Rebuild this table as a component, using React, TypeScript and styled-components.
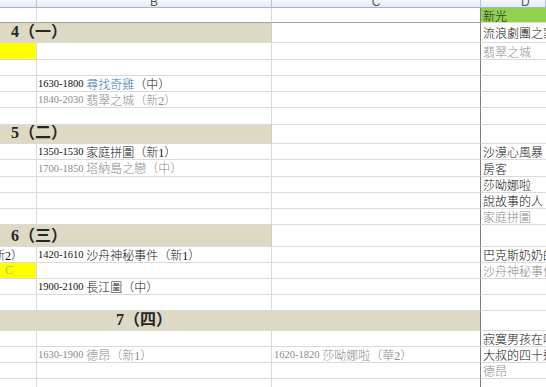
import React from 'react'
import styled, { createGlobalStyle } from 'styled-components'

const GlobalStyle = createGlobalStyle`
  body {
    margin: 0;
    background: #ffffff;
    overflow: hidden;
  }
`

const COLUMNS = '37px 235px 209px 1fr'
const GRID = '#dadada'

type Tone = 'black' | 'gray' | 'blue' | 'green'

const toneColor: Record<Tone, string> = {
  black: '#111111',
  gray: '#8a8a8a',
  blue: '#3a7db3',
  green: '#9ccf5a'
}

export default function App() {
  return (
    <>
      <GlobalStyle />
      <Sheet>
        <HeaderRow>
          <HeaderCell />
          <HeaderCell>B</HeaderCell>
          <HeaderCell>C</HeaderCell>
          <HeaderCell>D</HeaderCell>
        </HeaderRow>

        <Row $h={15}>
          <Cell $rule />
          <Cell $rule />
          <Cell $rule $edge />
          <DCell $fill="#92d050">新光</DCell>
        </Row>

        <Row $h={20}>
          <Band $span={2} $indent={11}>4（一）</Band>
          <Cell $edge />
          <DCell>流浪劇團之家</DCell>
        </Row>

        <Row $h={17}>
          <Cell $fill="#ffff00" />
          <Cell />
          <Cell $edge />
          <DCell $tone="gray">翡翠之城</DCell>
        </Row>

        <EmptyRow h={16} />

        <Row $h={16}>
          <Cell />
          <Cell>
            <Num>1630-1800 </Num>
            <Han $tone="blue">尋找奇雞</Han>
            <Han>（中）</Han>
          </Cell>
          <Cell $edge />
          <DCell />
        </Row>

        <Row $h={16}>
          <Cell />
          <Cell $tone="gray">
            <Num>1840-2030 </Num>
            <Han>翡翠之城（新2）</Han>
          </Cell>
          <Cell $edge />
          <DCell />
        </Row>

        <EmptyRow h={17} />

        <Row $h={19}>
          <Band $span={2} $indent={11}>5（二）</Band>
          <Cell $edge />
          <DCell />
        </Row>

        <Row $h={16}>
          <Cell />
          <Cell>
            <Num>1350-1530 </Num>
            <Han>家庭拼圖（新1）</Han>
          </Cell>
          <Cell $edge />
          <DCell>沙漠心風暴</DCell>
        </Row>

        <Row $h={17}>
          <Cell />
          <Cell $tone="gray">
            <Num>1700-1850 </Num>
            <Han>塔納島之戀（中）</Han>
          </Cell>
          <Cell $edge />
          <DCell>房客</DCell>
        </Row>

        <EmptyRow h={16} d="莎呦娜啦" />
        <EmptyRow h={16} d="說故事的人" />
        <EmptyRow h={16} d="家庭拼圖" tone="gray" />

        <Row $h={22}>
          <Band $span={2} $indent={11}>6（三）</Band>
          <Cell $edge />
          <DCell />
        </Row>

        <Row $h={16}>
          <Cell $right>
            <Han>（新2）</Han>
          </Cell>
          <Cell>
            <Num>1420-1610 </Num>
            <Han>沙舟神秘事件（新1）</Han>
          </Cell>
          <Cell $edge />
          <DCell>巴克斯奶奶的派對</DCell>
        </Row>

        <Row $h={16}>
          <Cell $fill="#ffff00" $tone="green" $pad={5}>
            <Han>C</Han>
          </Cell>
          <Cell />
          <Cell $edge />
          <DCell $tone="gray">沙舟神秘事件</DCell>
        </Row>

        <Row $h={16}>
          <Cell />
          <Cell>
            <Num>1900-2100 </Num>
            <Han>長江圖（中）</Han>
          </Cell>
          <Cell $edge />
          <DCell />
        </Row>

        <EmptyRow h={16} />

        <Row $h={20}>
          <Band $span={3} $indent={116} $edge>
            7（四）
          </Band>
          <DCell />
        </Row>

        <EmptyRow h={16} d="寂寞男孩在哪裡" />

        <Row $h={16}>
          <Cell />
          <Cell $tone="gray">
            <Num>1630-1900 </Num>
            <Han>德昂（新1）</Han>
          </Cell>
          <Cell $edge $tone="gray" $pad={2}>
            <Num>1620-1820 </Num>
            <Han>莎呦娜啦（華2）</Han>
          </Cell>
          <DCell>大叔的四十道菜</DCell>
        </Row>

        <EmptyRow h={16} d="德昂" tone="gray" />
        <EmptyRow h={16} />
      </Sheet>
    </>
  )
}

const EmptyRow: React.FC<{ h: number; d?: string; tone?: Tone }> = ({
  h,
  d,
  tone
}) => (
  <Row $h={h}>
    <Cell />
    <Cell />
    <Cell $edge />
    <DCell $tone={tone}>{d}</DCell>
  </Row>
)

const Sheet = styled.div`
  width: 546px;
  height: 387px;
  overflow: hidden;
  font-family: 'Liberation Serif', 'Noto Sans CJK TC', serif;
  color: #111111;
`

const HeaderRow = styled.div`
  display: grid;
  grid-template-columns: ${COLUMNS};
  height: 8px;
  background: linear-gradient(#f4f7fb, #e1e9f4);
`

const HeaderCell = styled.div`
  display: flex;
  align-items: flex-end;
  justify-content: center;
  overflow: hidden;
  border-right: 1px solid #b4c4d8;
  border-bottom: 1px solid #9eb6ce;
  font-family: 'Liberation Sans', sans-serif;
  font-size: 12px;
  line-height: 10px;
  color: #4a5a6e;

  &:last-child {
    justify-content: flex-start;
    padding-left: 40px;
  }
`

const Row = styled.div<{ $h: number }>`
  display: grid;
  grid-template-columns: ${COLUMNS};
  height: ${(p) => p.$h}px;
`

const Cell = styled.div<{
  $fill?: string
  $tone?: Tone
  $edge?: boolean
  $rule?: boolean
  $right?: boolean
  $pad?: number
}>`
  display: flex;
  align-items: center;
  justify-content: ${(p) => (p.$right ? 'flex-end' : 'flex-start')};
  min-width: 0;
  overflow: hidden;
  white-space: nowrap;
  padding: 0 ${(p) => (p.$right ? 13 : 0)}px 0 ${(p) => p.$pad ?? 1}px;
  background: ${(p) => p.$fill ?? 'transparent'};
  border-right: 1px solid ${(p) => (p.$edge ? '#7f7f7f' : GRID)};
  border-bottom: 1px solid ${(p) => (p.$rule ? '#a0a0a0' : GRID)};
  font-size: 12px;
  font-weight: 300;
  color: ${(p) => toneColor[p.$tone ?? 'black']};
`

const DCell = styled.div<{ $fill?: string; $tone?: Tone }>`
  display: flex;
  align-items: center;
  min-width: 0;
  overflow: hidden;
  white-space: nowrap;
  padding-left: 2px;
  background: ${(p) => p.$fill ?? 'transparent'};
  border-bottom: 1px solid ${GRID};
  font-family: 'Noto Sans CJK TC', sans-serif;
  font-size: 12px;
  font-weight: 300;
  color: ${(p) => toneColor[p.$tone ?? 'black']};
`

const Band = styled.div<{ $span: number; $indent: number; $edge?: boolean }>`
  grid-column: span ${(p) => p.$span};
  display: flex;
  align-items: flex-end;
  padding: 0 0 2px ${(p) => p.$indent}px;
  background: #ddd9c4;
  border-right: 1px solid ${(p) => (p.$edge ? '#7f7f7f' : '#d2cdb5')};
  border-bottom: 1px solid ${GRID};
  font-size: 16px;
  line-height: 16px;
  font-weight: 700;
  color: #262626;
  white-space: nowrap;
`

const Num = styled.span`
  font-family: 'Liberation Serif', serif;
  font-size: 10.5px;
  font-weight: 400;
  white-space: pre;
`

const Han = styled.span<{ $tone?: Tone }>`
  font-family: 'Liberation Serif', 'Noto Sans CJK TC', serif;
  ${(p) => (p.$tone ? `color: ${toneColor[p.$tone]};` : '')}
`
